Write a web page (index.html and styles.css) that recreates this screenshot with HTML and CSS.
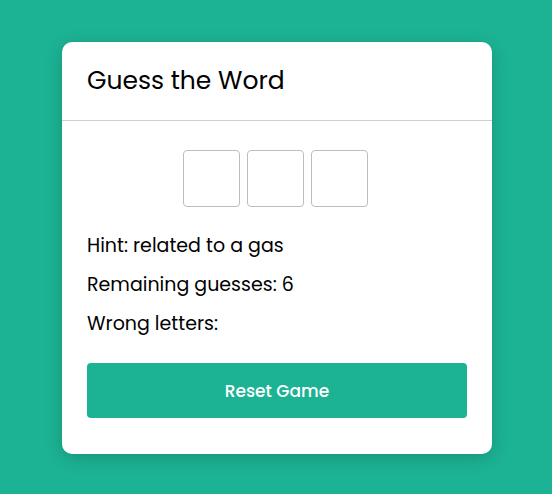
FILE: index.html
```html
<!DOCTYPE html>
<html lang="en">
<head>
<meta charset="utf-8">
<title>Guess the Word</title>
<link rel="stylesheet" href="styles.css">
</head>
<body>
<main class="card">
  <header class="card-header">
    <h1 class="title">Guess the Word</h1>
  </header>
  <section class="card-body">
    <div class="letters">
      <div class="letter"></div>
      <div class="letter"></div>
      <div class="letter"></div>
    </div>
    <p class="info">Hint: related to a gas</p>
    <p class="info">Remaining guesses: 6</p>
    <p class="info">Wrong letters:</p>
    <button class="reset" type="button">Reset Game</button>
  </section>
</main>
</body>
</html>
```

FILE: styles.css
```css
* { box-sizing: border-box; }
html, body { height: 100%; }
body {
  margin: 0;
  padding: 2px 0 0 2px;
  background: #1cb394;
  font-family: "Poppins", "Open Sans", sans-serif;
  color: #000;
  display: flex;
  align-items: center;
  justify-content: center;
}
.card {
  width: 430px;
  background: #fff;
  border-radius: 10px;
  box-shadow: 0 4px 18px rgba(0,0,0,0.18);
}
.card-header {
  padding: 21px 25px;
  border-bottom: 1px solid #cfcfcf;
}
.title {
  margin: 0;
  font-size: 25px;
  line-height: 36px;
  font-weight: 400;
}
.card-body {
  padding: 29px 25px 36px;
  display: flex;
  flex-direction: column;
}
.letters {
  display: flex;
  justify-content: center;
  gap: 7px;
  margin-bottom: 25px;
  padding-right: 3px;
}
.letter {
  width: 57px;
  height: 57px;
  border: 1px solid #bdbdbd;
  border-radius: 4px;
}
.info {
  margin: 0 0 12px;
  font-size: 19px;
  line-height: 27px;
}
.info:last-of-type { margin-bottom: 0; }
.reset {
  margin-top: 26px;
  height: 55px;
  border: none;
  border-radius: 4px;
  background: #1cb394;
  color: #fff;
  font-family: inherit;
  font-size: 17px;
  font-weight: 500;
}
```
